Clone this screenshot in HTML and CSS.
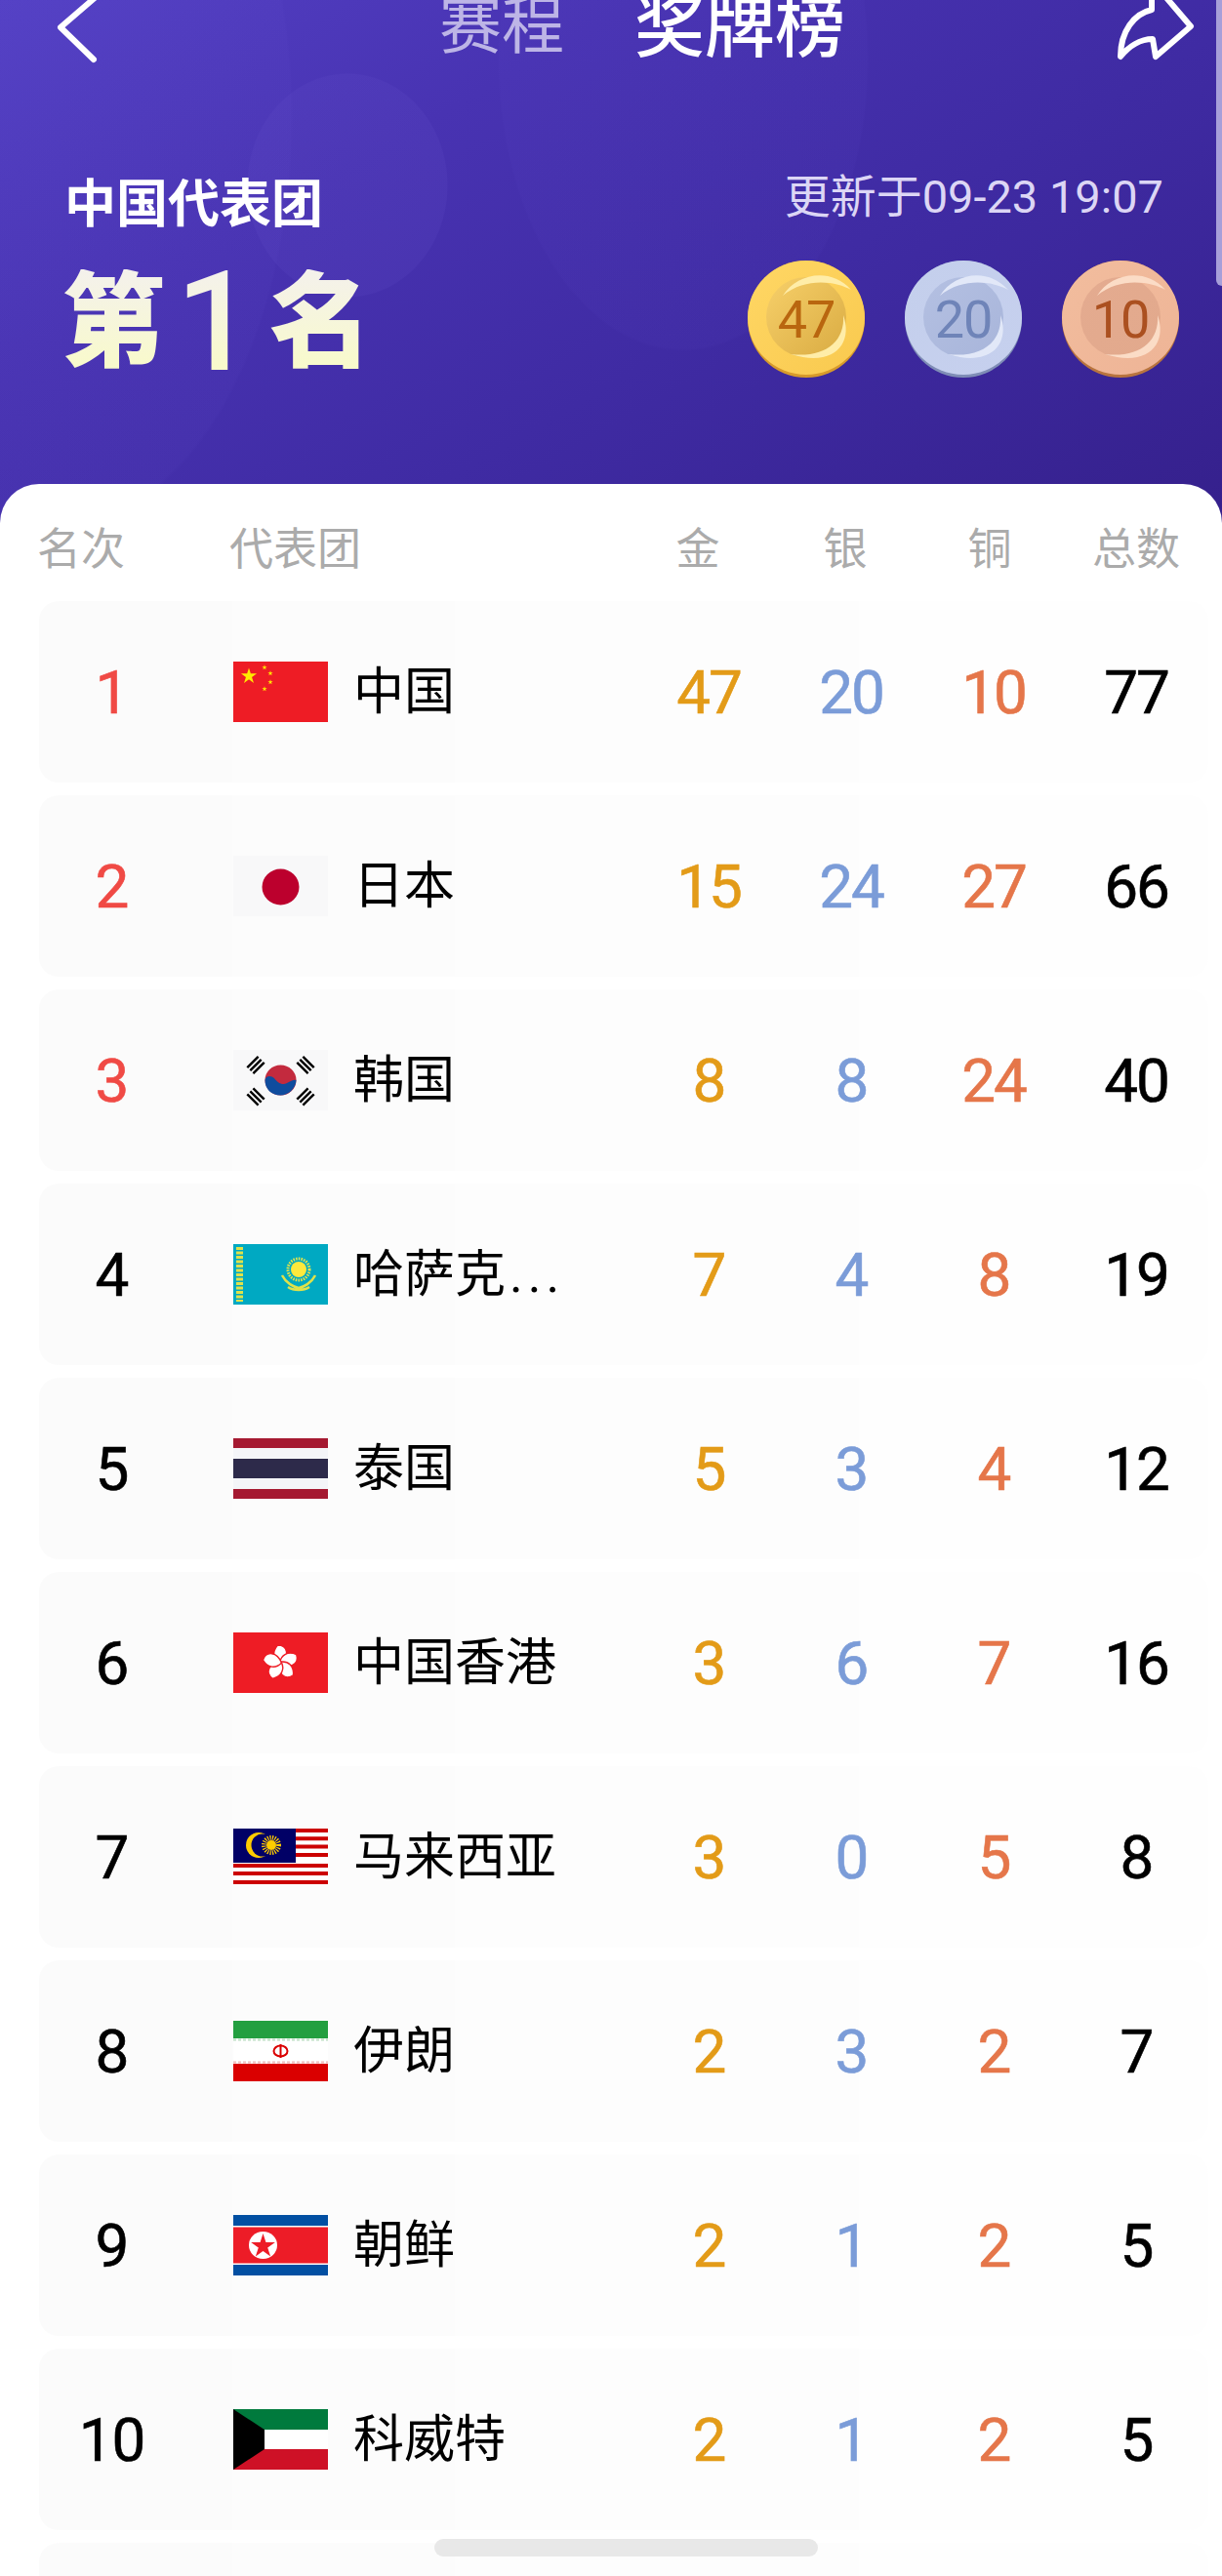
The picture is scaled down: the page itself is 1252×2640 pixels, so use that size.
FILE: index.html
```html
<!DOCTYPE html>
<html lang="zh-CN">
  <head>
    <meta charset="utf-8">
    <title>奖牌榜</title>
    <link rel="stylesheet" href="styles.css">
  </head>
  <body>
    <header class="hero">
      <nav class="nav">
        <svg class="back" viewBox="0 0 44 74"><path d="M40 5 4 36l34 33"/></svg>
        <span class="tab">赛程</span>
        <span class="tab active">奖牌榜</span>
        <svg class="share" viewBox="0 0 80 74"><path d="M4 66C4 40 18 22 36 18V3L47 1 76 35 40 66 37 48C24 48 12 56 4 66Z"/></svg>
      </nav>
      <div class="summary">
        <div>
          <div class="team">中国代表团</div>
          <div class="place"><span>第</span><span class="place-num">1</span><span>名</span></div>
        </div>
        <div class="summary-right">
          <div class="updated">更新于09-23 19:07</div>
          <div class="medals">
            <svg class="medal" viewBox="0 0 120 120">
              <defs>
                <linearGradient id="goldOuter" x1="0" y1="0" x2="1" y2="1"><stop offset="0" stop-color="#ffd765"/><stop offset="1" stop-color="#f9c94e"/></linearGradient>
                <linearGradient id="goldInner" x1="0" y1="0" x2="1" y2="1"><stop offset="0" stop-color="#f7d06a"/><stop offset="1" stop-color="#d9ab42"/></linearGradient>
              </defs>
              <ellipse cx="60" cy="60" rx="60" ry="60" fill="#d79a2b"/>
              <ellipse cx="60" cy="58.500" rx="60" ry="58.500" fill="url(#goldOuter)"/>
              <circle cx="60" cy="58" r="41" fill="url(#goldInner)"/>
              <path d="M36 36C50 14 84 6 106 30 92 22 60 16 36 36Z" fill="#ffeda8"/>
              <path d="M98 56C108 84 90 110 44 96 78 100 100 84 98 56Z" fill="#ffeda8"/>
              <text class="medal-num gold-num" x="60" y="79">47</text>
            </svg>
            <svg class="medal" viewBox="0 0 120 120">
              <defs>
                <linearGradient id="silverOuter" x1="0" y1="0" x2="1" y2="1"><stop offset="0" stop-color="#c4cfec"/><stop offset="1" stop-color="#c6d0ee"/></linearGradient>
                <linearGradient id="silverInner" x1="0" y1="0" x2="1" y2="1"><stop offset="0" stop-color="#b4c0e2"/><stop offset="1" stop-color="#a8b5da"/></linearGradient>
              </defs>
              <ellipse cx="60" cy="60" rx="60" ry="60" fill="#7f8db6"/>
              <ellipse cx="60" cy="58.500" rx="60" ry="58.500" fill="url(#silverOuter)"/>
              <circle cx="60" cy="58" r="41" fill="url(#silverInner)"/>
              <path d="M36 36C50 14 84 6 106 30 92 22 60 16 36 36Z" fill="#e2e8f8"/>
              <path d="M98 56C108 84 90 110 44 96 78 100 100 84 98 56Z" fill="#e2e8f8"/>
              <text class="medal-num silver-num" x="60" y="79">20</text>
            </svg>
            <svg class="medal" viewBox="0 0 120 120">
              <defs>
                <linearGradient id="bronzeOuter" x1="0" y1="0" x2="1" y2="1"><stop offset="0" stop-color="#f2bd9e"/><stop offset="1" stop-color="#eeb496"/></linearGradient>
                <linearGradient id="bronzeInner" x1="0" y1="0" x2="1" y2="1"><stop offset="0" stop-color="#e4ab90"/><stop offset="1" stop-color="#e2a98c"/></linearGradient>
              </defs>
              <ellipse cx="60" cy="60" rx="60" ry="60" fill="#b8743f"/>
              <ellipse cx="60" cy="58.500" rx="60" ry="58.500" fill="url(#bronzeOuter)"/>
              <circle cx="60" cy="58" r="41" fill="url(#bronzeInner)"/>
              <path d="M36 36C50 14 84 6 106 30 92 22 60 16 36 36Z" fill="#fbdcc6"/>
              <path d="M98 56C108 84 90 110 44 96 78 100 100 84 98 56Z" fill="#fbdcc6"/>
              <text class="medal-num bronze-num" x="60" y="79">10</text>
            </svg>
          </div>
        </div>
      </div>
    </header>

    <main class="card">
      <div class="thead">
        <span>名次</span>
        <span>代表团</span>
        <span class="c">金</span>
        <span class="c">银</span>
        <span class="c">铜</span>
        <span class="c">总数</span>
      </div>

      <div class="row">
        <span class="rank top">1</span>
        <div class="country">
          <svg class="flag" viewBox="0 0 97 62">
            <rect width="97" height="62" fill="#ee1c25"/>
            <defs><path id="star" d="M0-1 .588.809-.951-.309H.951L-.588.809Z"/></defs>
            <g fill="#ffea00">
              <use href="#star" transform="translate(16 15) scale(8.500)"/>
              <use href="#star" transform="translate(32 6) scale(2.800)"/>
              <use href="#star" transform="translate(38 12) scale(2.800)"/>
              <use href="#star" transform="translate(38 21) scale(2.800)"/>
              <use href="#star" transform="translate(32 28) scale(2.800)"/>
            </g>
          </svg>
          <span class="name">中国</span>
        </div>
        <span class="num gold">47</span><span class="num silver">20</span><span class="num bronze">10</span><span class="num">77</span>
      </div>

      <div class="row">
        <span class="rank top">2</span>
        <div class="country">
          <svg class="flag" viewBox="0 0 97 62">
            <rect width="97" height="62" fill="#f8f8f9"/>
            <ellipse cx="48.500" cy="32" rx="19" ry="18.500" fill="#bc002d"/>
          </svg>
          <span class="name">日本</span>
        </div>
        <span class="num gold">15</span><span class="num silver">24</span><span class="num bronze">27</span><span class="num">66</span>
      </div>

      <div class="row">
        <span class="rank top">3</span>
        <div class="country">
          <svg class="flag" viewBox="0 0 97 62">
            <rect width="97" height="62" fill="#f8f8f9"/>
            <ellipse cx="48.500" cy="31" rx="16" ry="15.500" fill="#c32a3e"/>
            <path d="M32.500 31C33 26 39 26 42 29 45 33 50 37 55 34 59 32 62 30 64.500 31 64 40 56 46.500 48.500 46.500 39 46.500 32.500 40 32.500 31Z" fill="#0f4c9e"/>
            <g fill="#000">
              <g transform="translate(23 15.500) rotate(-45)"><rect x="-8" y="-5.500" width="16" height="2.400"/><rect x="-8" y="-1.200" width="16" height="2.400"/><rect x="-8" y="3.100" width="16" height="2.400"/></g>
              <g transform="translate(74 15.500) rotate(45)"><rect x="-8" y="-5.500" width="16" height="2.400"/><rect x="-8" y="-1.200" width="16" height="2.400"/><rect x="-8" y="3.100" width="16" height="2.400"/></g>
              <g transform="translate(23 48) rotate(45)"><rect x="-8" y="-5.500" width="16" height="2.400"/><rect x="-8" y="-1.200" width="16" height="2.400"/><rect x="-8" y="3.100" width="16" height="2.400"/></g>
              <g transform="translate(74 48) rotate(-45)"><rect x="-8" y="-5.500" width="16" height="2.400"/><rect x="-8" y="-1.200" width="16" height="2.400"/><rect x="-8" y="3.100" width="16" height="2.400"/></g>
            </g>
          </svg>
          <span class="name">韩国</span>
        </div>
        <span class="num gold">8</span><span class="num silver">8</span><span class="num bronze">24</span><span class="num">40</span>
      </div>

      <div class="row">
        <span class="rank">4</span>
        <div class="country">
          <svg class="flag" viewBox="0 0 97 62">
            <rect width="97" height="62" fill="#00a9c2"/>
            <path d="M6.500 3V59" stroke="#dfe24a" stroke-width="7" stroke-dasharray="3 1.500"/>
            <circle cx="67" cy="26" r="11" fill="none" stroke="#e8e64a" stroke-width="3" stroke-dasharray="1.500 1.200"/>
            <circle cx="67" cy="26" r="8" fill="#ffe93c"/>
            <path d="M50 32C54 40 62 44 67 45 72 44 80 40 84 32M56 44C62 48 72 48 78 44" fill="none" stroke="#dfe24a" stroke-width="2.500"/>
          </svg>
          <span class="name">哈萨克<span class="dots">...</span></span>
        </div>
        <span class="num gold">7</span><span class="num silver">4</span><span class="num bronze">8</span><span class="num">19</span>
      </div>

      <div class="row">
        <span class="rank">5</span>
        <div class="country">
          <svg class="flag" viewBox="0 0 97 62">
            <rect width="97" height="62" fill="#f4f5f8"/>
            <rect width="97" height="10" fill="#a51931"/>
            <rect y="52" width="97" height="10" fill="#a51931"/>
            <rect y="21" width="97" height="20" fill="#2d2a4a"/>
          </svg>
          <span class="name">泰国</span>
        </div>
        <span class="num gold">5</span><span class="num silver">3</span><span class="num bronze">4</span><span class="num">12</span>
      </div>

      <div class="row">
        <span class="rank">6</span>
        <div class="country">
          <svg class="flag" viewBox="0 0 97 62">
            <rect width="97" height="62" fill="#ee1c25"/>
            <g fill="#fff" stroke="#ee1c25" stroke-width="1.400" transform="translate(48.500 31)">
              <path id="petal" d="M0 1C-8-3-9-11-3-18 7-18 10-7 0 1Z"/>
              <use href="#petal" transform="rotate(72)"/>
              <use href="#petal" transform="rotate(144)"/>
              <use href="#petal" transform="rotate(216)"/>
              <use href="#petal" transform="rotate(288)"/>
            </g>
          </svg>
          <span class="name">中国香港</span>
        </div>
        <span class="num gold">3</span><span class="num silver">6</span><span class="num bronze">7</span><span class="num">16</span>
      </div>

      <div class="row">
        <span class="rank">7</span>
        <div class="country">
          <svg class="flag" viewBox="0 0 97 58">
            <rect width="97" height="58" fill="#fff"/>
            <path d="M0 2H97M0 10.300H97M0 18.600H97M0 26.900H97M0 38H97M0 46H97M0 55H97" stroke="#cc0001" stroke-width="4"/>
            <rect width="64" height="35" fill="#010066"/>
            <circle cx="26" cy="17" r="13" fill="#fc0"/>
            <circle cx="30" cy="17" r="11.500" fill="#010066"/>
            <circle cx="39" cy="17" r="7.500" fill="none" stroke="#fc0" stroke-width="5" stroke-dasharray="1.200 1.200"/>
            <circle cx="39" cy="17" r="5" fill="#fc0"/>
          </svg>
          <span class="name">马来西亚</span>
        </div>
        <span class="num gold">3</span><span class="num silver">0</span><span class="num bronze">5</span><span class="num">8</span>
      </div>

      <div class="row">
        <span class="rank">8</span>
        <div class="country">
          <svg class="flag" viewBox="0 0 97 62">
            <rect width="97" height="62" fill="#fff"/>
            <rect width="97" height="18" fill="#239f40"/>
            <rect y="44" width="97" height="18" fill="#da0000"/>
            <path d="M0 19.500H97" stroke="#bfe0c6" stroke-width="2" stroke-dasharray="3 2"/>
            <path d="M0 42.500H97" stroke="#f0bcbc" stroke-width="2" stroke-dasharray="3 2"/>
            <ellipse cx="48.500" cy="31" rx="7" ry="5.500" fill="none" stroke="#da0000" stroke-width="2"/>
            <path d="M48.500 24V38" stroke="#da0000" stroke-width="2"/>
          </svg>
          <span class="name">伊朗</span>
        </div>
        <span class="num gold">2</span><span class="num silver">3</span><span class="num bronze">2</span><span class="num">7</span>
      </div>

      <div class="row">
        <span class="rank">9</span>
        <div class="country">
          <svg class="flag" viewBox="0 0 97 62">
            <rect width="97" height="62" fill="#fff"/>
            <rect width="97" height="11" fill="#024fa2"/>
            <rect y="51" width="97" height="11" fill="#024fa2"/>
            <rect y="12.500" width="97" height="37" fill="#ed1c27"/>
            <ellipse cx="30.500" cy="31" rx="14.500" ry="14" fill="#fff"/>
            <use href="#star" transform="translate(30.500 32) scale(13)" fill="#ed1c27"/>
          </svg>
          <span class="name">朝鲜</span>
        </div>
        <span class="num gold">2</span><span class="num silver">1</span><span class="num bronze">2</span><span class="num">5</span>
      </div>

      <div class="row">
        <span class="rank">10</span>
        <div class="country">
          <svg class="flag" viewBox="0 0 97 62">
            <rect width="97" height="62" fill="#fff"/>
            <rect width="97" height="21" fill="#007a3d"/>
            <rect y="41" width="97" height="21" fill="#ce1126"/>
            <path d="M0 0 32 21V41L0 62Z" fill="#000"/>
          </svg>
          <span class="name">科威特</span>
        </div>
        <span class="num gold">2</span><span class="num silver">1</span><span class="num bronze">2</span><span class="num">5</span>
      </div>

      <div class="row"></div>
    </main>

    <div class="side-bar"></div>
    <div class="bottom-bar"></div>
  </body>
</html>
```

FILE: styles.css
```css
*{
  box-sizing:border-box;
  margin:0;
  padding:0;
}
html,body{
  height:2640px;
  overflow:hidden;
}
body{
  position:relative;
  background:#3a2590;
  font-family:Roboto,"Noto Sans CJK SC",sans-serif;
  color:#000;
}

/* top purple part */
.hero{
  height:536px;
  overflow:hidden;
  background:
    radial-gradient(ellipse 103px 115px at 356px 190px,rgba(110,90,210,.12) 99%,transparent 100%),
    radial-gradient(ellipse 240px 420px at 60px 120px,rgba(120,100,225,.05) 99%,transparent 100%),
    radial-gradient(ellipse 190px 300px at 700px 60px,rgba(110,90,220,.05) 99%,transparent 100%),
    linear-gradient(150deg,#5340c4 0%,#4833b2 30%,#3f2ba3 60%,#35208c 100%);
}
.nav{
  display:flex;
  align-items:flex-end;
  height:66px;
  padding:0 28px 0 58px;
}
.back{
  width:44px;
  height:74px;
  flex:none;
  fill:none;
  stroke:#fff;
  stroke-width:6;
  stroke-linecap:round;
  stroke-linejoin:round;
}
.tab{
  margin-left:348px;
  font-size:64px;
  line-height:76px;
  color:#bdb5e6;
}
.tab.active{
  margin-left:72px;
  font-size:72px;
  font-weight:500;
  color:#fff;
}
.share{
  width:80px;
  height:74px;
  margin-left:auto;
  flex:none;
  fill:none;
  stroke:#fff;
  stroke-width:6;
  stroke-linejoin:round;
}
.summary{
  display:flex;
  justify-content:space-between;
  padding:0 44px 0 66px;
}
.team{
  margin-top:114px;
  font-size:53px;
  line-height:60px;
  font-weight:700;
  color:#fff;
}
.place{
  display:flex;
  align-items:center;
  margin:36px 0 0 -3px;
  height:110px;
  font-size:106px;
  line-height:110px;
  font-weight:900;
  color:#f8f8d0;
  background:linear-gradient(#f4f1ec,#f9fbc8);
  -webkit-background-clip:text;
  background-clip:text;
  -webkit-text-fill-color:transparent;
}
.place-num{
  margin:0 15px 0 11px;
  font-size:142px;
  font-weight:500;
}
.updated{
  margin-top:111px;
  margin-right:16px;
  font-size:47px;
  line-height:50px;
  text-align:right;
  color:#dcd6f5;
}
.medals{
  display:flex;
  gap:41px;
  margin-top:40px;
}
.medal{
  width:120px;
  height:120px;
}
.medal-num{
  font-family:Roboto,sans-serif;
  font-size:54px;
  letter-spacing:-1px;
  text-anchor:middle;
}
.gold-num{fill:#b9660f;}
.silver-num{fill:#6f84b8;}
.bronze-num{fill:#ab5020;}

/* white table part */
.card{
  margin-top:-40px;
  height:2144px;
  padding-left:40px;
  background:#fff;
  border-radius:40px 40px 0 0;
  overflow:hidden;
}
.thead{
  display:grid;
  grid-template-columns:197px 407px 146px 156px 140px 160px;
  height:120px;
  margin-left:-2px;
  padding-top:44px;
  font-size:45px;
  line-height:48px;
  color:#ababab;
}
.c{
  text-align:center;
}
.row{
  display:grid;
  grid-template-columns:149px 464px repeat(4,146px);
  align-items:center;
  height:186px;
  margin:0 14px 13px 0;
  border-radius:20px;
  background:linear-gradient(90deg,#fbfbfb 198px,#fcfcfc 198px,#fcfcfc 426px,#fdfdfd 426px,#fdfdfd 840px,#fefefe 840px);
  font-size:62px;
  line-height:70px;
}
.rank{
  padding-top:2px;
  text-align:center;
  letter-spacing:-1px;
  -webkit-text-stroke:.6px currentColor;
}
.rank.top{
  color:#f04a45;
}
.country{
  display:flex;
  align-items:center;
  margin-left:50px;
}
.flag{
  width:97px;
  height:62px;
  flex:none;
}
.name{
  margin:2px 0 0 26px;
  font-size:52px;
  white-space:nowrap;
}
.dots{
  margin-left:4px;
  letter-spacing:5px;
}
.num{
  padding-top:2px;
  text-align:center;
  letter-spacing:-2px;
  -webkit-text-stroke:.6px currentColor;
}
.gold{color:#e39b18;}
.silver{color:#7b9cd8;}
.bronze{color:#e5764a;}

/* scroll bars */
.side-bar{
  position:absolute;
  top:0;
  right:0;
  width:6px;
  height:293px;
  border-radius:0 0 0 6px;
  background:#a79fd9;
}
.bottom-bar{
  position:absolute;
  top:2602px;
  left:445px;
  width:393px;
  height:18px;
  border-radius:9px;
  background:#e8e8e8;
}
```
